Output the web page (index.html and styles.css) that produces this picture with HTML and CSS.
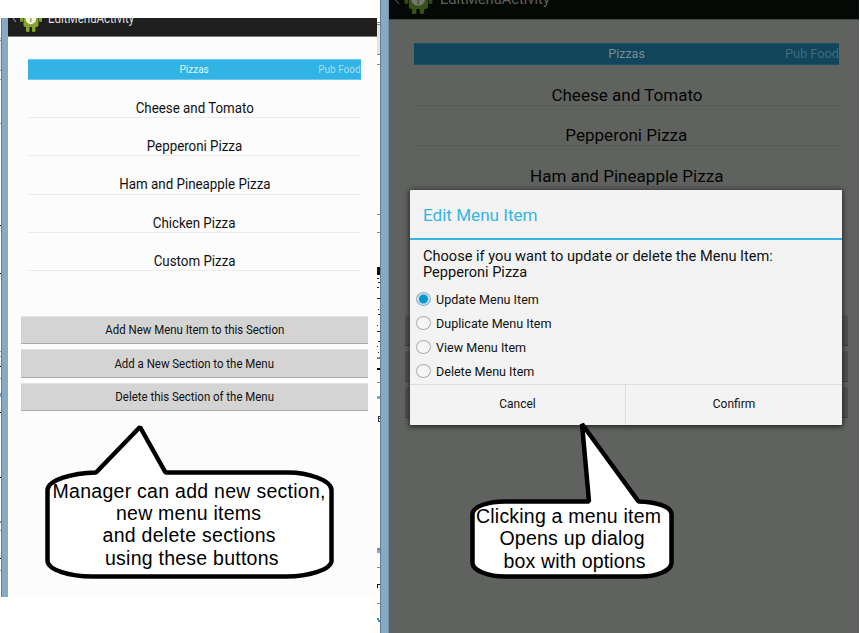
FILE: index.html
```html
<!DOCTYPE html>
<html lang="en">
<head>
<meta charset="utf-8">
<title>EditMenuActivity</title>
<link rel="stylesheet" href="styles.css">
</head>
<body>
<main class="board">
  <section class="shot shot-left">
    <svg class="sliver" width="2" height="579" viewBox="0 0 2 579" shape-rendering="crispEdges">
      <rect width="2" height="579" fill="#fff"/><rect y="23" width="2" height="29" fill="#e4e4e4"/>
      <path d="M0 20.5h1M0 22.5h1M0 52.5h1M0 61.5h1M0 105.5h1M0 333.5h1M0 338.5h1M0 360.5h1M0 512.5h1M0 552.5h1" stroke="#999"/>
      <path d="M0 207.500h1M0 255.500h1M0 348.500h1M0 394.500h1M0 459.500h1M0 540.500h1" stroke="#111"/>
      <path d="M0 375.500h1M0 377.500h1M0 503.500h1" stroke="#7d9cc0" stroke-width="2"/>
    </svg>
    <div class="rail rail-left"></div>
    <div class="phone">
      <header class="appbar">
        <svg class="robot" width="36" height="28" viewBox="0 0 36 28">
          <path d="M8 10l-3 4 3 4" fill="none" stroke="#aaa"/>
          <rect x="12" y="7" width="3" height="11" rx="1.500" fill="#78a02b"/><rect x="31" y="7" width="3" height="11" rx="1.500" fill="#78a02b"/>
          <path d="M15.500 6h15v15q0 2-2 2h-11q-2 0-2-2z" fill="#82a52c"/>
          <rect x="18" y="20" width="3.500" height="8" rx="1.500" fill="#82a52c"/><rect x="24" y="20" width="3.500" height="8" rx="1.500" fill="#82a52c"/>
          <ellipse cx="22.800" cy="14.500" rx="5.300" ry="5.800" fill="#f2f3df"/><path d="M22.800 14v4" stroke="#91a65a" stroke-width="1.500"/>
        </svg>
        <span class="apptitle">EditMenuActivity</span>
      </header>
      <div class="tabs"><span class="tab-on">Pizzas</span><span class="tab-next">Pub Food</span></div>
      <ul class="items">
        <li><span>Cheese and Tomato</span></li>
        <li><span>Pepperoni Pizza</span></li>
        <li><span>Ham and Pineapple Pizza</span></li>
        <li><span>Chicken Pizza</span></li>
        <li><span>Custom Pizza</span></li>
      </ul>
      <div class="actions">
        <div class="action"><span>Add New Menu Item to this Section</span></div>
        <div class="action"><span>Add a New Section to the Menu</span></div>
        <div class="action"><span>Delete this Section of the Menu</span></div>
      </div>
    </div>
    <svg class="callout callout-left" width="300" height="162" viewBox="40 420 300 162">
      <path d="M140 427L165.500 472.500H288C308 472.500 331 480 331.500 490V561C331 570 307 576.500 287 576.500H92C70 576.500 48 570 47.500 561V490C48 480 72 473 96 472.500Z" fill="#fff" stroke="#000" stroke-width="4.500" stroke-linejoin="bevel"/>
      <text x="52.500" y="498" textLength="273">Manager can add new section,</text>
      <text x="116" y="520" textLength="145">new menu items</text>
      <text x="102.500" y="542" textLength="173">and delete sections</text>
      <text x="105" y="565" textLength="173.500">using these buttons</text>
    </svg>
  </section>

  <section class="shot shot-right">
    <svg class="sliver" width="3" height="633" viewBox="0 0 3 633" shape-rendering="crispEdges">
      <rect width="3" height="633" fill="#fff"/><rect y="25" width="3" height="29" fill="#e4e4e4"/>
      <path d="M0 22.500h3M0 24.500h3M0 54.500h3M0 64.500h3M0 214h3M0 232.500h3M0 382h3M0 567.500h3M0 603.500h3" stroke="#888"/>
      <rect y="267" width="3" height="8" fill="#111"/><rect y="368" width="3" height="2" fill="#000"/>
      <path d="M0 278.500h2M1 282.500h2M0 287.500h2M0 298.500h3M1 309.500h1M1 314.500h2M0 325.500h1M0 331.500h3M1 341.500h2M0 346.500h1M1 352.500h1" stroke="#222"/>
      <path d="M0 358h3M0 549h3" stroke="#888" stroke-width="2"/><path d="M0 397.500h3M0 551.500h3" stroke="#87a7cf" stroke-width="3"/>
      <path d="M2.500 416.500h-1v5h1M.5 418.500h2" fill="none" stroke="#334"/><path d="M.5 588v-3.500h2" fill="none" stroke="#101020"/><path d="M0 618l3 4" stroke="#3987d0" stroke-width="2"/>
    </svg>
    <div class="rail rail-right"></div>
    <div class="phone phone-dim">
      <header class="appbar">
        <svg class="robot" width="46" height="28" viewBox="0 0 36 28" preserveAspectRatio="none">
          <path d="M8 10l-3 4 3 4" fill="none" stroke="#454945"/>
          <rect x="12" y="7" width="3" height="11" rx="1.500" fill="#304813"/><rect x="31" y="7" width="3" height="11" rx="1.500" fill="#304813"/>
          <path d="M15.500 6h15v15q0 2-2 2h-11q-2 0-2-2z" fill="#385214"/>
          <rect x="18" y="20" width="3.500" height="8" rx="1.500" fill="#385214"/><rect x="24" y="20" width="3.500" height="8" rx="1.500" fill="#385214"/>
          <ellipse cx="22.800" cy="14" rx="5.300" ry="5.800" fill="#747871"/><path d="M22.800 14v4" stroke="#49543a" stroke-width="1.500"/>
        </svg>
        <span class="apptitle">EditMenuActivity</span>
      </header>
      <div class="tabs"><span class="tab-on">Pizzas</span><span class="tab-next">Pub Food</span></div>
      <ul class="items">
        <li><span>Cheese and Tomato</span></li>
        <li><span>Pepperoni Pizza</span></li>
        <li><span>Ham and Pineapple Pizza</span></li>
      </ul>
      <div class="actions">
        <div class="action"></div>
        <div class="action"></div>
        <div class="action"></div>
      </div>
    </div>
    <div class="dialog">
      <h1><span>Edit Menu Item</span></h1>
      <p><span class="line1">Choose if you want to update or delete the Menu Item:</span><br><span class="line2">Pepperoni Pizza</span></p>
      <div class="options">
        <div class="option"><i class="radio radio-on"></i><span>Update Menu Item</span></div>
        <div class="option"><i class="radio"></i><span>Duplicate Menu Item</span></div>
        <div class="option"><i class="radio"></i><span>View Menu Item</span></div>
        <div class="option"><i class="radio"></i><span>Delete Menu Item</span></div>
      </div>
      <footer><div><span>Cancel</span></div><div><span>Confirm</span></div></footer>
    </div>
    <svg class="callout callout-right" width="220" height="170" viewBox="460 415 220 170">
      <path d="M582 424L638.500 501.500C655 502 671 506 671.500 514V563C671 571 656 576.500 641 576.500H505C489 576.500 473 571 472.500 563V514C473 506 489 501.500 505 501.500H589Z" fill="#fff" stroke="#000" stroke-width="4.500" stroke-linejoin="bevel"/>
      <text x="476" y="523" textLength="185">Clicking a menu item</text>
      <text x="499.500" y="545" textLength="145">Opens up dialog</text>
      <text x="503.500" y="568" textLength="142">box with options</text>
    </svg>
  </section>
</main>
</body>
</html>
```

FILE: styles.css
```css
* { box-sizing: border-box; }
body { margin: 0; background: #fff; font-family: Roboto, "Liberation Sans", sans-serif; color: #111; }
.board { display: flex; width: 860px; height: 633px; overflow: hidden; }
.shot { position: relative; display: flex; }
.shot-left { width: 377px; height: 597px; padding-top: 18px; }
.shot-right { width: 483px; height: 633px; }
.sliver { display: block; flex: none; }
.rail { flex: none; background: #88a9c2; border-left: 1px solid #647f94; }
.rail-left { width: 7px; margin-left: -1px; }
.rail-right { width: 9px; border-right: 1px solid #6c91b0; }
.phone { width: 369px; height: 579px; background: #fcfcfc; overflow: hidden; }
span { display: inline-block; white-space: nowrap; }

.appbar { display: flex; height: 18.500px; background: #1f1f1f; border-bottom: 1px solid #777; overflow: hidden; }
.robot { flex: none; margin-top: -14px; }
.apptitle { margin: -8px 0 0 4px; font-size: 14px; line-height: 16px; color: #ddd; transform: scaleX(.825); transform-origin: left; }
.tabs { display: grid; grid-template-columns: 1fr auto 1fr; align-items: center; height: 20.500px; margin: 22.500px 16px 0 20px; background: #31b3e5; border: solid #6bcbed; border-width: 1px 0; font-size: 11px; color: #e2f5fc; }
.tab-on { grid-column: 2; transform: scaleX(.91); }
.tab-next { justify-self: end; color: #a4def5; transform: scaleX(.91); transform-origin: right; }
.items { list-style: none; margin: 0 16px 0 20px; padding: 0; }
.items li { height: 38.400px; padding-top: 18px; border-bottom: 1px solid #ececec; text-align: center; font-size: 15.500px; line-height: 20px; }
.items span { transform: scaleX(.86); }
.actions { display: grid; gap: 5px; margin: 44.500px 9px 0 13px; }
.action { display: flex; align-items: center; justify-content: center; height: 28.500px; padding-bottom: 1px; background: #d4d4d4; border-top: 1px solid #e2e2e2; border-bottom: 1px solid #aaa; font-size: 12.500px; }
.action span { transform: scaleX(.915); }

.phone-dim { width: 470px; height: 633px; background: #60625f; color: #050505; }
.phone-dim .appbar { height: 20px; background: #050905; border-color: #444744; }
.phone-dim .apptitle { margin: -9px 0 0 5px; color: #5c605c; transform: scaleX(1.05); }
.phone-dim .tabs { height: 22.500px; margin: 22.500px 20px 0 25px; background: #10455b; border-color: #1c5066; color: #7c8b91; font-size: 12px; }
.phone-dim .tab-next { color: #426a7a; transform: scaleX(1.06); }
.phone-dim .tab-on { transform: scaleX(1.04); }
.phone-dim .items { margin: 0 20px 0 25px; }
.phone-dim .items li { height: 40.700px; padding-top: 19.500px; border-color: #565856; font-size: 16px; line-height: 21px; }
.phone-dim .items span { transform: scaleX(1.065); }
.phone-dim .actions { gap: 5.500px; margin: 128px 11px 0 16px; }
.phone-dim .action { height: 30.500px; background: #4e514e; border-top-color: #555855; border-bottom-color: #3a3d3a; }

.dialog { position: absolute; left: 33px; top: 190px; width: 432px; height: 234.500px; display: flex; flex-direction: column; background: #f3f3f3; border-radius: 1px; box-shadow: 0 1px 5px 1px #252a25; }
.dialog span { transform-origin: left; }
.dialog h1 { height: 49.500px; margin: 0; padding: 14px 12.500px 0; border-bottom: 2px solid #35b5e5; color: #35b5e5; font-size: 17px; line-height: 23px; font-weight: 400; }
.dialog h1 span { transform: scaleX(1.005); }
.dialog p { margin: 0; padding: 8px 12.500px 0; height: 48px; font-size: 14px; line-height: 16px; }
.dialog .line1 { transform: scaleX(1.042); }
.dialog .line2 { transform: scaleX(1.04); }
.options { display: grid; grid-auto-rows: 24.100px; height: 96.500px; }
.option { display: flex; align-items: center; gap: 5px; padding-left: 6px; font-size: 12.500px; }
.option span { transform: scaleX(1.005); }
.radio { width: 15px; height: 14px; margin-top: -1px; border: 1px solid #b0b0b0; border-radius: 50%; background: #f5f5f5; }
.radio-on { border-color: #94b2c1; background: radial-gradient(circle, #0897cf 0 4px, #c7dfeb 5px); }
.dialog footer { display: grid; grid-template-columns: 215px 1fr; flex: 1; border-top: 1px solid #ddd; font-size: 12px; }
.dialog footer div { display: flex; align-items: center; justify-content: center; padding-bottom: 1px; }
.dialog footer div + div { border-left: 1px solid #ddd; }

.callout { position: absolute; overflow: visible; }
.callout-left { left: 40px; top: 420px; }
.callout-right { left: 83px; top: 415px; }
.callout text { font: 19.500px "Liberation Sans", Arial, sans-serif; fill: #000; }
```
